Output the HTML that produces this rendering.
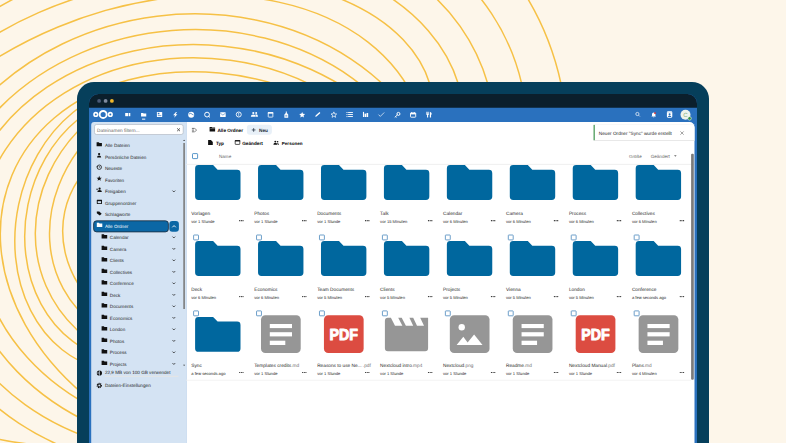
<!DOCTYPE html><html><head><meta charset="utf-8"><style>
html,body{margin:0;padding:0;width:786px;height:443px;overflow:hidden;background:#fdf6ea}
svg{display:block}
text{font-family:"Liberation Sans",sans-serif;white-space:pre}
</style></head><body>
<svg width="786" height="443" viewBox="0 0 786 443" font-family="Liberation Sans" text-rendering="geometricPrecision">
<rect width="786" height="443" fill="#fdf6ea"/>
<defs><clipPath id="ct"><rect x="0" y="0" width="786" height="84"/></clipPath><clipPath id="ctr"><rect x="250" y="0" width="536" height="84"/></clipPath><clipPath id="cl"><rect x="0" y="84" width="78" height="359"/></clipPath></defs>
<g fill="none" stroke="#f6c146" stroke-width="1.5"><ellipse cx="137.99" cy="220.53" rx="301.90" ry="209.45" transform="rotate(-22.45 137.99 220.53)"/><ellipse cx="184.85" cy="241.12" rx="264.84" ry="226.66" transform="rotate(-7.06 184.85 241.12)"/><ellipse cx="188.80" cy="241.49" rx="249.19" ry="211.60" transform="rotate(-4.56 188.80 241.49)"/><ellipse cx="202.74" cy="247.27" rx="242.62" ry="202.24" transform="rotate(5.98 202.74 247.27)"/><ellipse cx="204.51" cy="247.44" rx="226.47" ry="188.98" transform="rotate(7.88 204.51 247.44)"/><ellipse cx="233.06" cy="268.10" rx="239.83" ry="187.71" transform="rotate(22.79 233.06 268.10)"/><g clip-path="url(#ct)"><ellipse cx="170.70" cy="152.24" rx="296.11" ry="198.31" transform="rotate(-10.42 170.70 152.24)"/><ellipse cx="164.35" cy="143.86" rx="272.58" ry="163.05" transform="rotate(-10.28 164.35 143.86)"/></g><g clip-path="url(#ctr)"><ellipse cx="178.27" cy="213.09" rx="410.12" ry="338.70" transform="rotate(-33.49 178.27 213.09)"/><ellipse cx="179.28" cy="220.21" rx="374.47" ry="281.38" transform="rotate(-33.53 179.28 220.21)"/><ellipse cx="184.69" cy="220.84" rx="337.23" ry="252.56" transform="rotate(-35.22 184.69 220.84)"/></g><g clip-path="url(#cl)"><ellipse cx="131.53" cy="228.54" rx="115.39" ry="143.10" transform="rotate(12.06 131.53 228.54)"/><ellipse cx="137.44" cy="227.14" rx="111.78" ry="133.81" transform="rotate(11.53 137.44 227.14)"/><ellipse cx="190.56" cy="223.49" rx="157.43" ry="142.99" transform="rotate(-23.28 190.56 223.49)"/><ellipse cx="197.42" cy="215.91" rx="152.60" ry="130.65" transform="rotate(-28.43 197.42 215.91)"/><ellipse cx="188.21" cy="238.19" rx="126.30" ry="107.63" transform="rotate(12.16 188.21 238.19)"/></g></g>
<rect x="77" y="82" width="632" height="420" rx="17" fill="#063f5b"/>
<path d="M89 103a9 9 0 0 1 9-9h590a9 9 0 0 1 9 9v360h-608z" fill="#2a71be"/>
<path d="M89 103.6a9.6 9.6 0 0 1 9.6-9.6h588.8a9.6 9.6 0 0 1 9.6 9.6v4.1h-608z" fill="#0b1f2c"/>
<circle cx="99.1" cy="100.9" r="1.9" fill="#4b5a78"/><circle cx="105.6" cy="100.9" r="1.9" fill="#7f8ba0"/><circle cx="111.9" cy="100.9" r="1.9" fill="#f1b82c"/>
<g fill="none" stroke="#fff"><circle cx="95.8" cy="114.45" r="1.8" stroke-width="1.6"/><circle cx="103.15" cy="114.45" r="3.5" stroke-width="1.85"/><circle cx="110.3" cy="114.45" r="1.8" stroke-width="1.6"/></g><rect x="125.20" y="113" width="2.9" height="3.2" fill="#fff"/><rect x="128.70" y="113" width="1.6" height="3.2" fill="#fff"/><path d="M141.05 113h2l.6.6h2.6v2.8h-5.2z" fill="#fff"/><rect x="142.05" y="118.6" width="3.2" height="1.1" fill="#fff" opacity=".9"/><rect x="156.9" y="111.9" width="5.3" height="5.1" rx=".5" fill="#fff"/><rect x="157.8" y="112.8" width="1.6" height="1.5" fill="#2a71be"/><rect x="157.8" y="115" width="3.5" height="1.1" fill="#2a71be" opacity=".6"/><path d="M175.95 112L173.15 115.3H175.05L174.15 117.8L177.45 114.2H175.55L176.95 112Z" fill="#fff"/><circle cx="191.2" cy="114.7" r="3" fill="#fff"/><path d="M189.0 114.2q1.2-1.6 2.6-.4t2 1.2" stroke="#2a71be" stroke-width=".8" fill="none"/><circle cx="207.05" cy="114.6" r="2.4" fill="none" stroke="#fff" stroke-width="1"/><path d="M208.55 116.2l1.4 1.2" stroke="#fff" stroke-width="1"/><rect x="220.09999999999997" y="112.3" width="5.6" height="4.7" rx=".5" fill="#fff"/><path d="M220.29999999999998 113.2l2.6 1.9 2.6-1.9" stroke="#2a71be" stroke-width=".6" fill="none"/><circle cx="238.75" cy="114.5" r="2.5" fill="none" stroke="#fff" stroke-width=".9"/><rect x="238.35" y="113" width=".8" height="1.8" fill="#fff"/><rect x="238.35" y="115.3" width=".8" height=".7" fill="#fff"/><circle cx="253.29999999999998" cy="113" r="1.1" fill="#fff"/><path d="M250.79999999999998 116.7q0-2.2 2.5-2.2t2.5 2.2z" fill="#fff"/><circle cx="256.2" cy="112.9" r="1" fill="#fff"/><path d="M255.4 114.4q2.6-.3 2.6 2.3h-2z" fill="#fff"/><rect x="268.25" y="112.7" width="4.6" height="4.4" rx=".4" fill="none" stroke="#fff" stroke-width=".8"/><rect x="267.84999999999997" y="112.1" width="5.4" height="1.5" fill="#fff"/><path d="M285.8 111.6h1v1.3l1.4 1.6v3.2h-3.8v-3.2l1.4-1.6z" fill="#fff"/><rect x="285.3" y="114.9" width="2" height="1.8" fill="#2a71be" opacity=".5"/><polygon points="302.15,111.90 303.00,113.83 305.10,114.04 303.53,115.45 303.97,117.51 302.15,116.45 300.33,117.51 300.77,115.45 299.20,114.04 301.30,113.83" fill="#fff"/><path d="M315.2 116.8l.4-1.3 3.9-3.5.9 1-3.9 3.5z" fill="#fff"/><polygon points="333.85,111.90 334.61,113.85 336.70,113.97 335.09,115.30 335.61,117.33 333.85,116.20 332.09,117.33 332.61,115.30 331.00,113.97 333.09,113.85" fill="none" stroke="#fff" stroke-width=".7"/><rect x="346.5" y="112.00" width="1" height="1" fill="#fff"/><rect x="348.09999999999997" y="112.00" width="4.8" height=".9" fill="#fff"/><rect x="346.5" y="114.05" width="1" height="1" fill="#fff"/><rect x="348.09999999999997" y="114.05" width="4.8" height=".9" fill="#fff"/><rect x="346.5" y="116.10" width="1" height="1" fill="#fff"/><rect x="348.09999999999997" y="116.10" width="4.8" height=".9" fill="#fff"/><rect x="362.95" y="111.9" width="1.1" height="5.1" fill="#fff"/><rect x="364.55" y="113.6" width="1.6" height="3.4" fill="#fff"/><rect x="366.55" y="113" width="1.6" height="4" fill="#fff"/><path d="M378.5 114.6l1.8 1.8 3.9-3.9" stroke="#fff" stroke-width=".9" fill="none" opacity=".75"/><circle cx="398.45" cy="113.9" r="1.5" fill="none" stroke="#fff" stroke-width="1"/><path d="M397.35 115l-2.6 2.4M395.65 116.6l.8.8" stroke="#fff" stroke-width="1"/><rect x="410.5" y="112.9" width="5.2" height="4.3" rx=".6" fill="none" stroke="#fff" stroke-width=".9"/><rect x="410.5" y="112.9" width="5.2" height="1.5" fill="#fff"/><rect x="411.3" y="112.1" width=".7" height="1" fill="#fff"/><rect x="414.20000000000005" y="112.1" width=".7" height="1" fill="#fff"/><path d="M426.25 111.7v2.3q0 .9.8 1.1v2.4h1.1v-2.4q.8-.2.8-1.1v-2.3h-.6v2h-.45v-2h-.6v2h-.45v-2z" fill="#fff"/><path d="M429.84999999999997 111.7q2 .4 2 2.9h-.8v2.9h-1.2z" fill="#fff"/><circle cx="637.4" cy="114" r="1.6" fill="none" stroke="#fff" stroke-width=".8" opacity=".85"/><path d="M638.6 115.2l1.3 1.3" stroke="#fff" stroke-width=".8" opacity=".85"/><path d="M651.4 116.6h4.6l-.6-.9v-1.5a1.7 1.7 0 0 0-3.4 0v1.5z" fill="#fff"/><rect x="653.2" y="116.7" width="1" height=".6" fill="#fff"/><circle cx="655" cy="113.1" r=".95" fill="#e9322d"/><rect x="666.9" y="111.3" width="5.4" height="6.4" rx="1.1" fill="#fff"/><rect x="666.9" y="112.1" width="5.4" height=".45" fill="#2a71be" opacity=".35"/><circle cx="669.6" cy="114.3" r="1" fill="#2a71be"/><path d="M667.9 117.1q0-1.7 1.7-1.7t1.7 1.7z" fill="#2a71be"/><circle cx="685.5" cy="114.7" r="5" fill="#eef3ec"/><text x="685.50" y="116.90" font-size="6" fill="#7fae7f" text-anchor="middle">C</text><circle cx="689.6" cy="118.4" r="1.75" fill="#2e8b3e" stroke="#eef3ec" stroke-width=".6"/>
<path d="M91.2 125a3 3 0 0 1 3-3h92.1v330h-95.1z" fill="#d4e3f3"/>
<path d="M186.3 122h503.2a5 5 0 0 1 5 5v325h-508.2z" fill="#fff"/>
<rect x="94.5" y="124.5" width="88.7" height="10" rx="2" fill="#fff" stroke="#a9b2bc" stroke-width=".6"/>
<text x="97.10" y="131.50" font-size="4.76" fill="#666">Dateinamen filtern...</text>
<path d="M177.1 128.3l2.9 2.9M180 128.3l-2.9 2.9" stroke="#333" stroke-width=".75"/>
<rect x="93.6" y="220.8" width="74.8" height="11.1" rx="3" fill="#0b67a5" stroke="#1c2b3a" stroke-width=".8"/>
<rect x="169.3" y="221" width="9.6" height="10.8" rx="3" fill="#0b67a5"/>
<text x="104.90" y="147.20" font-size="4.63" fill="#262626">Alle Dateien</text>
<text x="104.90" y="158.70" font-size="4.63" fill="#262626">Persönliche Dateien</text>
<text x="104.90" y="170.20" font-size="4.63" fill="#262626">Neueste</text>
<text x="104.90" y="181.70" font-size="4.63" fill="#262626">Favoriten</text>
<text x="104.90" y="193.20" font-size="4.63" fill="#262626">Freigaben</text>
<text x="104.90" y="204.70" font-size="4.63" fill="#262626">Gruppenordner</text>
<text x="104.90" y="216.20" font-size="4.63" fill="#262626">Schlagworte</text>
<text x="104.90" y="227.70" font-size="4.63" fill="#fff">Alle Ordner</text>
<text x="109.80" y="239.20" font-size="4.63" fill="#262626">Calendar</text>
<text x="109.80" y="250.70" font-size="4.63" fill="#262626">Camera</text>
<text x="109.80" y="262.20" font-size="4.63" fill="#262626">Clients</text>
<text x="109.80" y="273.70" font-size="4.63" fill="#262626">Collectives</text>
<text x="109.80" y="285.20" font-size="4.63" fill="#262626">Conference</text>
<text x="109.80" y="296.70" font-size="4.63" fill="#262626">Deck</text>
<text x="109.80" y="308.20" font-size="4.63" fill="#262626">Documents</text>
<text x="109.80" y="319.70" font-size="4.63" fill="#262626">Economics</text>
<text x="109.80" y="331.20" font-size="4.63" fill="#262626">London</text>
<text x="109.80" y="342.70" font-size="4.63" fill="#262626">Photos</text>
<text x="109.80" y="354.20" font-size="4.63" fill="#262626">Process</text>
<text x="109.80" y="365.70" font-size="4.63" fill="#262626">Projects</text>
<path d="M101.6 234.30h2.2l.7.7h2.7v3.4h-5.6z" fill="#111"/><path d="M172.5 236.60l1.35 1.35 1.35-1.35" stroke="#222" stroke-width=".8" fill="none"/><path d="M101.6 245.80h2.2l.7.7h2.7v3.4h-5.6z" fill="#111"/><path d="M172.5 248.10l1.35 1.35 1.35-1.35" stroke="#222" stroke-width=".8" fill="none"/><path d="M101.6 257.30h2.2l.7.7h2.7v3.4h-5.6z" fill="#111"/><path d="M172.5 259.60l1.35 1.35 1.35-1.35" stroke="#222" stroke-width=".8" fill="none"/><path d="M101.6 268.80h2.2l.7.7h2.7v3.4h-5.6z" fill="#111"/><path d="M172.5 271.10l1.35 1.35 1.35-1.35" stroke="#222" stroke-width=".8" fill="none"/><path d="M101.6 280.30h2.2l.7.7h2.7v3.4h-5.6z" fill="#111"/><path d="M172.5 282.60l1.35 1.35 1.35-1.35" stroke="#222" stroke-width=".8" fill="none"/><path d="M101.6 291.80h2.2l.7.7h2.7v3.4h-5.6z" fill="#111"/><path d="M172.5 294.10l1.35 1.35 1.35-1.35" stroke="#222" stroke-width=".8" fill="none"/><path d="M101.6 303.30h2.2l.7.7h2.7v3.4h-5.6z" fill="#111"/><path d="M172.5 305.60l1.35 1.35 1.35-1.35" stroke="#222" stroke-width=".8" fill="none"/><path d="M101.6 314.80h2.2l.7.7h2.7v3.4h-5.6z" fill="#111"/><path d="M172.5 317.10l1.35 1.35 1.35-1.35" stroke="#222" stroke-width=".8" fill="none"/><path d="M101.6 326.30h2.2l.7.7h2.7v3.4h-5.6z" fill="#111"/><path d="M172.5 328.60l1.35 1.35 1.35-1.35" stroke="#222" stroke-width=".8" fill="none"/><path d="M101.6 337.80h2.2l.7.7h2.7v3.4h-5.6z" fill="#111"/><path d="M172.5 340.10l1.35 1.35 1.35-1.35" stroke="#222" stroke-width=".8" fill="none"/><path d="M101.6 349.30h2.2l.7.7h2.7v3.4h-5.6z" fill="#111"/><path d="M172.5 351.60l1.35 1.35 1.35-1.35" stroke="#222" stroke-width=".8" fill="none"/><path d="M101.6 360.80h2.2l.7.7h2.7v3.4h-5.6z" fill="#111"/><path d="M172.5 363.10l1.35 1.35 1.35-1.35" stroke="#222" stroke-width=".8" fill="none"/><path d="M96.6 142.20h2.2l.7.7h2.4v3.3h-5.3z" fill="#111"/><circle cx="99.1" cy="154.10" r="1.1" fill="#111"/><path d="M97 157.50q0-2 2.1-2t2.1 2z" fill="#111"/><circle cx="99.3" cy="167.20" r="2.2" fill="none" stroke="#111" stroke-width=".75"/><path d="M99.3 166.00v1.3h1" stroke="#111" stroke-width=".55" fill="none"/><path d="M96.3 166.60l1 .9 .9-1" fill="#111"/><polygon points="99.20,175.85 99.91,177.63 101.82,177.75 100.34,178.97 100.82,180.82 99.20,179.80 97.58,180.82 98.06,178.97 96.58,177.75 98.49,177.63" fill="#111"/><circle cx="99.6" cy="188.70" r="1.1" fill="#111"/><path d="M97.3 192.10q0-2.1 2.3-2.1t2.3 2.1z" fill="#111"/><path d="M96.3 189.30h1.6M97.1 188.50v1.6" stroke="#111" stroke-width=".55"/><path d="M172.5 190.60l1.35 1.35 1.35-1.35" stroke="#222" stroke-width=".8" fill="none"/><rect x="96.8" y="199.70" width="5.2" height="4.2" rx=".4" fill="#111"/><rect x="97.7" y="201.20" width="3.4" height="2" fill="#d4e3f3"/><path d="M96.8 211.40h2.5l2.4 2.3-1.9 1.9-3-2.3z" fill="#111"/><path d="M96.8 222.70h2.1l.7.7h2.7v3.6h-5.5z" fill="#fff"/><path d="M172.3 227.3l1.75-1.75 1.75 1.75" stroke="#fff" stroke-width=".9" fill="none"/><path d="M183.1 141.1l1-1.3 1 1.3z" fill="#333"/><rect x="183.3" y="143" width="1.6" height="166" fill="#7c7c7c"/><path d="M183.1 364.8l1 1.3 1-1.3z" fill="#333"/><circle cx="99.4" cy="373" r="2.6" fill="#111"/><path d="M99.4 370.4v5.2M96.8 373h2.6" stroke="#d4e3f3" stroke-width=".7"/><circle cx="99.3" cy="385.5" r="2.05" fill="none" stroke="#111" stroke-width="1.3" stroke-dasharray=".9 .7"/><circle cx="99.3" cy="385.5" r="1.4" fill="none" stroke="#111" stroke-width="1"/>
<text x="104.90" y="373.90" font-size="4.63" fill="#262626">22,9 MB von 100 GB verwendet</text>
<rect x="104.9" y="375.8" width="73.5" height=".8" fill="#ece6df"/>
<text x="104.90" y="386.50" font-size="4.7" fill="#262626">Dateien-Einstellungen</text>
<path d="M191.9 128.4h2.8M191.9 130.1h2.2M191.9 131.8h2.8" stroke="#333" stroke-width=".7"/><path d="M195.2 128.8l1.3 1.3-1.3 1.3" stroke="#333" stroke-width=".7" fill="none"/><path d="M209.6 127h2l.6.6h2.9v3.9h-5.5z" fill="#111"/><path d="M210.3 128.6h4.6" stroke="#fff" stroke-width=".35"/><rect x="246.9" y="124.7" width="25" height="10.1" rx="3" fill="#e8f0f8"/><path d="M253.65 128.1v3.7M251.8 129.95h3.7" stroke="#1b2a3a" stroke-width=".7"/><text x="217.40" y="131.50" font-size="4.72" fill="#000" font-weight="bold">Alle Ordner</text><text x="259.10" y="131.80" font-size="4.71" fill="#1b2a3a" font-weight="bold">Neu</text><path d="M208.1 140.1h2.8l1.9 1.9v3h-4.7z" fill="#111"/><rect x="235.2" y="140.6" width="4.6" height="3.8" rx=".4" fill="none" stroke="#111" stroke-width=".7"/><rect x="234.9" y="140.2" width="5.3" height="1.2" fill="#111"/><circle cx="275.3" cy="141.6" r=".95" fill="#111"/><path d="M273.4 144.7q0-1.9 1.9-1.9t1.9 1.9z" fill="#111"/><circle cx="277.6" cy="141.8" r=".8" fill="#111"/><path d="M277 142.9q2 0 2 1.8h-1.2z" fill="#111"/><text x="216.00" y="144.90" font-size="4.64" fill="#000" font-weight="bold">Typ</text><text x="242.20" y="144.90" font-size="4.71" fill="#000" font-weight="bold">Geändert</text><text x="281.80" y="144.90" font-size="4.55" fill="#000" font-weight="bold">Personen</text><rect x="192.5" y="153.6" width="5.1" height="5" rx=".6" fill="none" stroke="#3d85c0" stroke-width=".85"/><text x="219.00" y="157.70" font-size="4.57" fill="#666">Name</text><text x="629.10" y="157.80" font-size="4.45" fill="#666">Größe</text><text x="650.70" y="157.80" font-size="4.58" fill="#666">Geändert</text><path d="M674 155.2h2.7l-1.35 1.6z" fill="#666"/><rect x="186" y="163.9" width="508" height=".8" fill="#ebebeb"/>
<path d="M198.50 165.10h14.6l4.5 4.7h19.5a3.4 3.4 0 0 1 3.4 3.4v23.4a3.4 3.4 0 0 1-3.4 3.4h-38.6a3.4 3.4 0 0 1-3.4-3.4v-28.1a3.4 3.4 0 0 1 3.4-3.4z" fill="#00679e"/><text x="191.30" y="214.90" font-size="4.75" fill="#262626">Vorlagen</text><text x="191.30" y="222.70" font-size="4.1" fill="#1e1e1e">vor 1 Stunde</text><circle cx="239.70" cy="220.70" r=".62" fill="#222"/><circle cx="241.35" cy="220.70" r=".62" fill="#222"/><circle cx="243.00" cy="220.70" r=".62" fill="#222"/><path d="M261.44 165.10h14.6l4.5 4.7h19.5a3.4 3.4 0 0 1 3.4 3.4v23.4a3.4 3.4 0 0 1-3.4 3.4h-38.6a3.4 3.4 0 0 1-3.4-3.4v-28.1a3.4 3.4 0 0 1 3.4-3.4z" fill="#00679e"/><text x="254.24" y="214.90" font-size="4.75" fill="#262626">Photos</text><text x="254.24" y="222.70" font-size="4.1" fill="#1e1e1e">vor 1 Stunde</text><circle cx="302.64" cy="220.70" r=".62" fill="#222"/><circle cx="304.29" cy="220.70" r=".62" fill="#222"/><circle cx="305.94" cy="220.70" r=".62" fill="#222"/><path d="M324.38 165.10h14.6l4.5 4.7h19.5a3.4 3.4 0 0 1 3.4 3.4v23.4a3.4 3.4 0 0 1-3.4 3.4h-38.6a3.4 3.4 0 0 1-3.4-3.4v-28.1a3.4 3.4 0 0 1 3.4-3.4z" fill="#00679e"/><text x="317.18" y="214.90" font-size="4.75" fill="#262626">Documents</text><text x="317.18" y="222.70" font-size="4.1" fill="#1e1e1e">vor 1 Stunde</text><circle cx="365.58" cy="220.70" r=".62" fill="#222"/><circle cx="367.23" cy="220.70" r=".62" fill="#222"/><circle cx="368.88" cy="220.70" r=".62" fill="#222"/><path d="M387.32 165.10h14.6l4.5 4.7h19.5a3.4 3.4 0 0 1 3.4 3.4v23.4a3.4 3.4 0 0 1-3.4 3.4h-38.6a3.4 3.4 0 0 1-3.4-3.4v-28.1a3.4 3.4 0 0 1 3.4-3.4z" fill="#00679e"/><text x="380.12" y="214.90" font-size="4.75" fill="#262626">Talk</text><text x="380.12" y="222.70" font-size="4.1" fill="#1e1e1e">vor 15 Minuten</text><circle cx="428.52" cy="220.70" r=".62" fill="#222"/><circle cx="430.17" cy="220.70" r=".62" fill="#222"/><circle cx="431.82" cy="220.70" r=".62" fill="#222"/><path d="M450.26 165.10h14.6l4.5 4.7h19.5a3.4 3.4 0 0 1 3.4 3.4v23.4a3.4 3.4 0 0 1-3.4 3.4h-38.6a3.4 3.4 0 0 1-3.4-3.4v-28.1a3.4 3.4 0 0 1 3.4-3.4z" fill="#00679e"/><text x="443.06" y="214.90" font-size="4.75" fill="#262626">Calendar</text><text x="443.06" y="222.70" font-size="4.1" fill="#1e1e1e">vor 6 Minuten</text><circle cx="491.46" cy="220.70" r=".62" fill="#222"/><circle cx="493.11" cy="220.70" r=".62" fill="#222"/><circle cx="494.76" cy="220.70" r=".62" fill="#222"/><path d="M513.20 165.10h14.6l4.5 4.7h19.5a3.4 3.4 0 0 1 3.4 3.4v23.4a3.4 3.4 0 0 1-3.4 3.4h-38.6a3.4 3.4 0 0 1-3.4-3.4v-28.1a3.4 3.4 0 0 1 3.4-3.4z" fill="#00679e"/><text x="506.00" y="214.90" font-size="4.75" fill="#262626">Camera</text><text x="506.00" y="222.70" font-size="4.1" fill="#1e1e1e">vor 6 Minuten</text><circle cx="554.40" cy="220.70" r=".62" fill="#222"/><circle cx="556.05" cy="220.70" r=".62" fill="#222"/><circle cx="557.70" cy="220.70" r=".62" fill="#222"/><path d="M576.14 165.10h14.6l4.5 4.7h19.5a3.4 3.4 0 0 1 3.4 3.4v23.4a3.4 3.4 0 0 1-3.4 3.4h-38.6a3.4 3.4 0 0 1-3.4-3.4v-28.1a3.4 3.4 0 0 1 3.4-3.4z" fill="#00679e"/><text x="568.94" y="214.90" font-size="4.75" fill="#262626">Process</text><text x="568.94" y="222.70" font-size="4.1" fill="#1e1e1e">vor 6 Minuten</text><circle cx="617.34" cy="220.70" r=".62" fill="#222"/><circle cx="618.99" cy="220.70" r=".62" fill="#222"/><circle cx="620.64" cy="220.70" r=".62" fill="#222"/><path d="M639.08 165.10h14.6l4.5 4.7h19.5a3.4 3.4 0 0 1 3.4 3.4v23.4a3.4 3.4 0 0 1-3.4 3.4h-38.6a3.4 3.4 0 0 1-3.4-3.4v-28.1a3.4 3.4 0 0 1 3.4-3.4z" fill="#00679e"/><text x="631.88" y="214.90" font-size="4.75" fill="#262626">Collectives</text><text x="631.88" y="222.70" font-size="4.1" fill="#1e1e1e">vor 6 Minuten</text><circle cx="680.28" cy="220.70" r=".62" fill="#222"/><circle cx="681.93" cy="220.70" r=".62" fill="#222"/><circle cx="683.58" cy="220.70" r=".62" fill="#222"/><rect x="193.60" y="235.00" width="4.9" height="4.9" rx=".5" fill="none" stroke="#4a88bd" stroke-width=".8"/><path d="M198.50 241.00h14.6l4.5 4.7h19.5a3.4 3.4 0 0 1 3.4 3.4v23.4a3.4 3.4 0 0 1-3.4 3.4h-38.6a3.4 3.4 0 0 1-3.4-3.4v-28.1a3.4 3.4 0 0 1 3.4-3.4z" fill="#00679e"/><text x="191.30" y="290.80" font-size="4.75" fill="#262626">Deck</text><text x="191.30" y="298.60" font-size="4.1" fill="#1e1e1e">vor 6 Minuten</text><circle cx="239.70" cy="296.60" r=".62" fill="#222"/><circle cx="241.35" cy="296.60" r=".62" fill="#222"/><circle cx="243.00" cy="296.60" r=".62" fill="#222"/><rect x="256.54" y="235.00" width="4.9" height="4.9" rx=".5" fill="none" stroke="#4a88bd" stroke-width=".8"/><path d="M261.44 241.00h14.6l4.5 4.7h19.5a3.4 3.4 0 0 1 3.4 3.4v23.4a3.4 3.4 0 0 1-3.4 3.4h-38.6a3.4 3.4 0 0 1-3.4-3.4v-28.1a3.4 3.4 0 0 1 3.4-3.4z" fill="#00679e"/><text x="254.24" y="290.80" font-size="4.75" fill="#262626">Economics</text><text x="254.24" y="298.60" font-size="4.1" fill="#1e1e1e">vor 6 Minuten</text><circle cx="302.64" cy="296.60" r=".62" fill="#222"/><circle cx="304.29" cy="296.60" r=".62" fill="#222"/><circle cx="305.94" cy="296.60" r=".62" fill="#222"/><rect x="319.48" y="235.00" width="4.9" height="4.9" rx=".5" fill="none" stroke="#4a88bd" stroke-width=".8"/><path d="M324.38 241.00h14.6l4.5 4.7h19.5a3.4 3.4 0 0 1 3.4 3.4v23.4a3.4 3.4 0 0 1-3.4 3.4h-38.6a3.4 3.4 0 0 1-3.4-3.4v-28.1a3.4 3.4 0 0 1 3.4-3.4z" fill="#00679e"/><text x="317.18" y="290.80" font-size="4.75" fill="#262626">Team Documents</text><text x="317.18" y="298.60" font-size="4.1" fill="#1e1e1e">vor 5 Minuten</text><circle cx="365.58" cy="296.60" r=".62" fill="#222"/><circle cx="367.23" cy="296.60" r=".62" fill="#222"/><circle cx="368.88" cy="296.60" r=".62" fill="#222"/><rect x="382.42" y="235.00" width="4.9" height="4.9" rx=".5" fill="none" stroke="#4a88bd" stroke-width=".8"/><path d="M387.32 241.00h14.6l4.5 4.7h19.5a3.4 3.4 0 0 1 3.4 3.4v23.4a3.4 3.4 0 0 1-3.4 3.4h-38.6a3.4 3.4 0 0 1-3.4-3.4v-28.1a3.4 3.4 0 0 1 3.4-3.4z" fill="#00679e"/><text x="380.12" y="290.80" font-size="4.75" fill="#262626">Clients</text><text x="380.12" y="298.60" font-size="4.1" fill="#1e1e1e">vor 5 Minuten</text><circle cx="428.52" cy="296.60" r=".62" fill="#222"/><circle cx="430.17" cy="296.60" r=".62" fill="#222"/><circle cx="431.82" cy="296.60" r=".62" fill="#222"/><rect x="445.36" y="235.00" width="4.9" height="4.9" rx=".5" fill="none" stroke="#4a88bd" stroke-width=".8"/><path d="M450.26 241.00h14.6l4.5 4.7h19.5a3.4 3.4 0 0 1 3.4 3.4v23.4a3.4 3.4 0 0 1-3.4 3.4h-38.6a3.4 3.4 0 0 1-3.4-3.4v-28.1a3.4 3.4 0 0 1 3.4-3.4z" fill="#00679e"/><text x="443.06" y="290.80" font-size="4.75" fill="#262626">Projects</text><text x="443.06" y="298.60" font-size="4.1" fill="#1e1e1e">vor 5 Minuten</text><circle cx="491.46" cy="296.60" r=".62" fill="#222"/><circle cx="493.11" cy="296.60" r=".62" fill="#222"/><circle cx="494.76" cy="296.60" r=".62" fill="#222"/><rect x="508.30" y="235.00" width="4.9" height="4.9" rx=".5" fill="none" stroke="#4a88bd" stroke-width=".8"/><path d="M513.20 241.00h14.6l4.5 4.7h19.5a3.4 3.4 0 0 1 3.4 3.4v23.4a3.4 3.4 0 0 1-3.4 3.4h-38.6a3.4 3.4 0 0 1-3.4-3.4v-28.1a3.4 3.4 0 0 1 3.4-3.4z" fill="#00679e"/><text x="506.00" y="290.80" font-size="4.75" fill="#262626">Vienna</text><text x="506.00" y="298.60" font-size="4.1" fill="#1e1e1e">vor 5 Minuten</text><circle cx="554.40" cy="296.60" r=".62" fill="#222"/><circle cx="556.05" cy="296.60" r=".62" fill="#222"/><circle cx="557.70" cy="296.60" r=".62" fill="#222"/><rect x="571.24" y="235.00" width="4.9" height="4.9" rx=".5" fill="none" stroke="#4a88bd" stroke-width=".8"/><path d="M576.14 241.00h14.6l4.5 4.7h19.5a3.4 3.4 0 0 1 3.4 3.4v23.4a3.4 3.4 0 0 1-3.4 3.4h-38.6a3.4 3.4 0 0 1-3.4-3.4v-28.1a3.4 3.4 0 0 1 3.4-3.4z" fill="#00679e"/><text x="568.94" y="290.80" font-size="4.75" fill="#262626">London</text><text x="568.94" y="298.60" font-size="4.1" fill="#1e1e1e">vor 5 Minuten</text><circle cx="617.34" cy="296.60" r=".62" fill="#222"/><circle cx="618.99" cy="296.60" r=".62" fill="#222"/><circle cx="620.64" cy="296.60" r=".62" fill="#222"/><rect x="634.18" y="235.00" width="4.9" height="4.9" rx=".5" fill="none" stroke="#4a88bd" stroke-width=".8"/><path d="M639.08 241.00h14.6l4.5 4.7h19.5a3.4 3.4 0 0 1 3.4 3.4v23.4a3.4 3.4 0 0 1-3.4 3.4h-38.6a3.4 3.4 0 0 1-3.4-3.4v-28.1a3.4 3.4 0 0 1 3.4-3.4z" fill="#00679e"/><text x="631.88" y="290.80" font-size="4.75" fill="#262626">Conference</text><text x="631.88" y="298.60" font-size="4.1" fill="#1e1e1e">a few seconds ago</text><circle cx="680.28" cy="296.60" r=".62" fill="#222"/><circle cx="681.93" cy="296.60" r=".62" fill="#222"/><circle cx="683.58" cy="296.60" r=".62" fill="#222"/><rect x="193.60" y="310.90" width="4.9" height="4.9" rx=".5" fill="none" stroke="#4a88bd" stroke-width=".8"/><path d="M198.50 316.90h14.6l4.5 4.7h19.5a3.4 3.4 0 0 1 3.4 3.4v23.4a3.4 3.4 0 0 1-3.4 3.4h-38.6a3.4 3.4 0 0 1-3.4-3.4v-28.1a3.4 3.4 0 0 1 3.4-3.4z" fill="#00679e"/><text x="191.30" y="366.70" font-size="4.75" fill="#262626">Sync</text><text x="191.30" y="374.50" font-size="4.1" fill="#1e1e1e">a few seconds ago</text><circle cx="239.70" cy="372.50" r=".62" fill="#222"/><circle cx="241.35" cy="372.50" r=".62" fill="#222"/><circle cx="243.00" cy="372.50" r=".62" fill="#222"/><rect x="256.54" y="310.90" width="4.9" height="4.9" rx=".5" fill="none" stroke="#4a88bd" stroke-width=".8"/><rect x="261.00" y="315.30" width="39.7" height="37.8" rx="4.3" fill="#969696"/><rect x="269.80" y="324.00" width="22.2" height="4.1" fill="#fff"/><rect x="269.80" y="332.20" width="22.2" height="4.2" fill="#fff"/><rect x="269.80" y="340.70" width="15.5" height="4.3" fill="#fff"/><text x="254.24" y="366.70" font-size="4.75" fill="#262626">Templates credits<tspan fill="#6e6e6e">.md</tspan></text><text x="254.24" y="374.50" font-size="4.1" fill="#1e1e1e">vor 1 Stunde</text><circle cx="302.64" cy="372.50" r=".62" fill="#222"/><circle cx="304.29" cy="372.50" r=".62" fill="#222"/><circle cx="305.94" cy="372.50" r=".62" fill="#222"/><rect x="319.48" y="310.90" width="4.9" height="4.9" rx=".5" fill="none" stroke="#4a88bd" stroke-width=".8"/><rect x="323.94" y="315.30" width="39.7" height="37.8" rx="4.3" fill="#dc4c41"/><text x="329.49" y="340.25" font-weight="bold" font-size="16" fill="#fff" stroke="#fff" stroke-width="1" stroke-linejoin="round" textLength="28.4" lengthAdjust="spacingAndGlyphs">PDF</text><text x="317.18" y="366.70" font-size="4.75" fill="#262626">Reasons to use Ne... <tspan fill="#6e6e6e">.pdf</tspan></text><text x="317.18" y="374.50" font-size="4.1" fill="#1e1e1e">vor 1 Stunde</text><circle cx="365.58" cy="372.50" r=".62" fill="#222"/><circle cx="367.23" cy="372.50" r=".62" fill="#222"/><circle cx="368.88" cy="372.50" r=".62" fill="#222"/><rect x="382.42" y="310.90" width="4.9" height="4.9" rx=".5" fill="none" stroke="#4a88bd" stroke-width=".8"/><path d="M384.90 351.2V320.8a3 3 0 0 1 3-3L390.90 317.80L395.00 325.80L402.40 325.80L398.20 317.80L401.70 317.80L405.90 325.80L413.20 325.80L409.40 317.80L413.20 317.80L417.00 325.80L424.00 325.80L420.20 317.80L428.10 317.80V348.2a3 3 0 0 1-3 3H387.90a3 3 0 0 1-3-3z" fill="#969696"/><text x="380.12" y="366.70" font-size="4.75" fill="#262626">Nextcloud intro<tspan fill="#6e6e6e">.mp4</tspan></text><text x="380.12" y="374.50" font-size="4.1" fill="#1e1e1e">vor 1 Stunde</text><circle cx="428.52" cy="372.50" r=".62" fill="#222"/><circle cx="430.17" cy="372.50" r=".62" fill="#222"/><circle cx="431.82" cy="372.50" r=".62" fill="#222"/><rect x="445.36" y="310.90" width="4.9" height="4.9" rx=".5" fill="none" stroke="#4a88bd" stroke-width=".8"/><rect x="449.82" y="315.30" width="39.7" height="37.8" rx="4.3" fill="#969696"/><circle cx="461.72" cy="327.20" r="3.2" fill="#fff"/><path d="M456.62 345.00l6.7-8.3 4.3 5.7 6.5-7.9 8.4 10.5z" fill="#fff"/><text x="443.06" y="366.70" font-size="4.75" fill="#262626">Nextcloud<tspan fill="#6e6e6e">.png</tspan></text><text x="443.06" y="374.50" font-size="4.1" fill="#1e1e1e">vor 1 Stunde</text><circle cx="491.46" cy="372.50" r=".62" fill="#222"/><circle cx="493.11" cy="372.50" r=".62" fill="#222"/><circle cx="494.76" cy="372.50" r=".62" fill="#222"/><rect x="508.30" y="310.90" width="4.9" height="4.9" rx=".5" fill="none" stroke="#4a88bd" stroke-width=".8"/><rect x="512.76" y="315.30" width="39.7" height="37.8" rx="4.3" fill="#969696"/><rect x="521.56" y="324.00" width="22.2" height="4.1" fill="#fff"/><rect x="521.56" y="332.20" width="22.2" height="4.2" fill="#fff"/><rect x="521.56" y="340.70" width="15.5" height="4.3" fill="#fff"/><text x="506.00" y="366.70" font-size="4.75" fill="#262626">Readme<tspan fill="#6e6e6e">.md</tspan></text><text x="506.00" y="374.50" font-size="4.1" fill="#1e1e1e">vor 1 Stunde</text><circle cx="554.40" cy="372.50" r=".62" fill="#222"/><circle cx="556.05" cy="372.50" r=".62" fill="#222"/><circle cx="557.70" cy="372.50" r=".62" fill="#222"/><rect x="571.24" y="310.90" width="4.9" height="4.9" rx=".5" fill="none" stroke="#4a88bd" stroke-width=".8"/><rect x="575.70" y="315.30" width="39.7" height="37.8" rx="4.3" fill="#dc4c41"/><text x="581.25" y="340.25" font-weight="bold" font-size="16" fill="#fff" stroke="#fff" stroke-width="1" stroke-linejoin="round" textLength="28.4" lengthAdjust="spacingAndGlyphs">PDF</text><text x="568.94" y="366.70" font-size="4.75" fill="#262626">Nextcloud Manual<tspan fill="#6e6e6e">.pdf</tspan></text><text x="568.94" y="374.50" font-size="4.1" fill="#1e1e1e">vor 1 Stunde</text><circle cx="617.34" cy="372.50" r=".62" fill="#222"/><circle cx="618.99" cy="372.50" r=".62" fill="#222"/><circle cx="620.64" cy="372.50" r=".62" fill="#222"/><rect x="634.18" y="310.90" width="4.9" height="4.9" rx=".5" fill="none" stroke="#4a88bd" stroke-width=".8"/><rect x="638.64" y="315.30" width="39.7" height="37.8" rx="4.3" fill="#969696"/><rect x="647.44" y="324.00" width="22.2" height="4.1" fill="#fff"/><rect x="647.44" y="332.20" width="22.2" height="4.2" fill="#fff"/><rect x="647.44" y="340.70" width="15.5" height="4.3" fill="#fff"/><text x="631.88" y="366.70" font-size="4.75" fill="#262626">Plans<tspan fill="#6e6e6e">.md</tspan></text><text x="631.88" y="374.50" font-size="4.1" fill="#1e1e1e">vor 4 Minuten</text><circle cx="680.28" cy="372.50" r=".62" fill="#222"/><circle cx="681.93" cy="372.50" r=".62" fill="#222"/><circle cx="683.58" cy="372.50" r=".62" fill="#222"/>
<rect x="186" y="379.8" width="505" height=".7" fill="#eeeeee"/>
<rect x="691.1" y="153.8" width="2.7" height="226" rx="1" fill="#7a7a7a"/>
<path d="M593.6 124.8h97.9a3 3 0 0 1 3 3v12.6h-100.9z" fill="#fff"/><rect x="593.6" y="140.2" width="100.9" height=".7" fill="#dedede"/><rect x="593.6" y="124.5" width="100.9" height=".4" fill="#eeeeee"/>
<rect x="593.6" y="124.9" width="1.1" height="15.3" fill="#2e8b3e"/>
<text x="598.80" y="134.80" font-size="4.71" fill="#262626">Neuer Ordner "Sync" wurde erstellt</text>
<path d="M680.4 131.4l3.3 3.3M683.7 131.4l-3.3 3.3" stroke="#666" stroke-width=".6"/>
</svg></body></html>
